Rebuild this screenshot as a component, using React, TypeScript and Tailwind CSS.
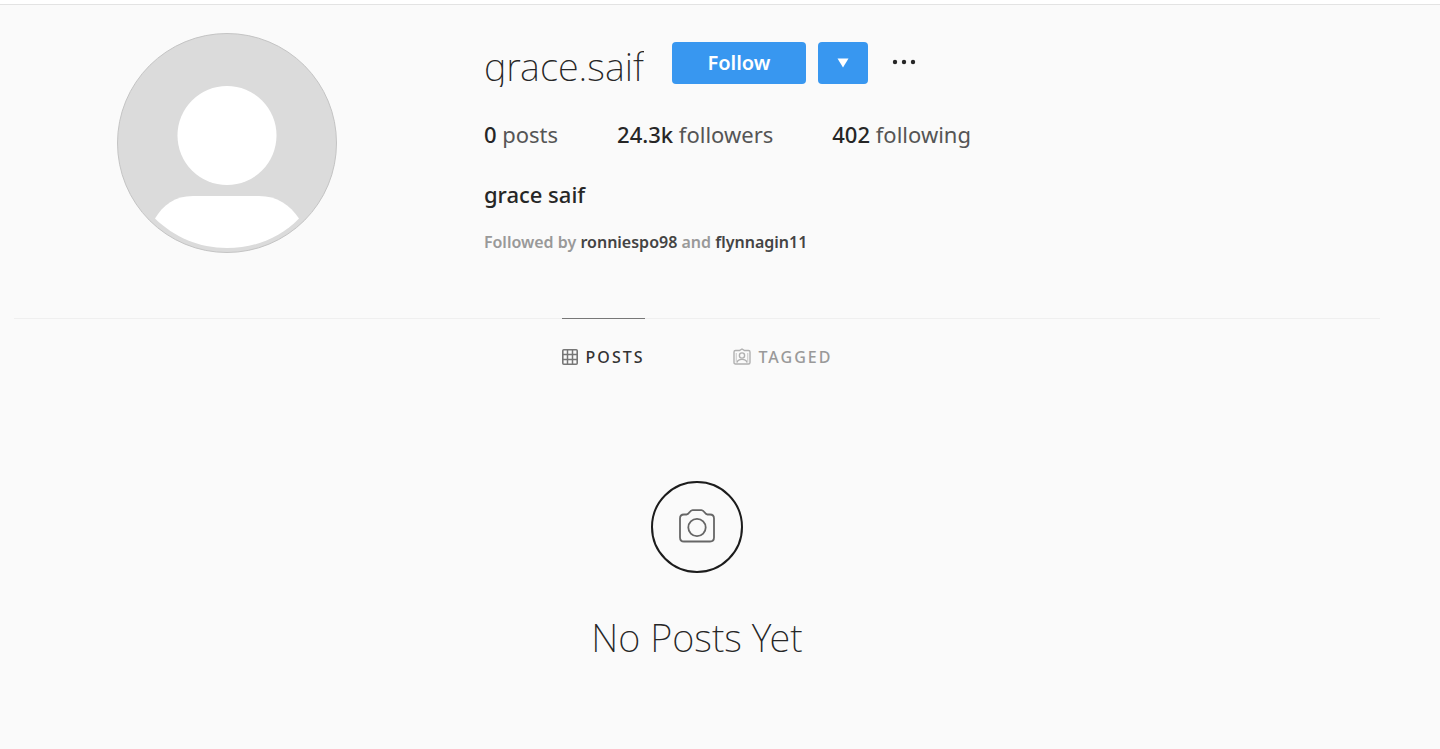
import { useState } from 'react';
import { clsx } from 'clsx';

const stats = [
  { value: '0', label: 'posts' },
  { value: '24.3k', label: 'followers' },
  { value: '402', label: 'following' },
];

function Avatar() {
  return (
    <svg viewBox="0 0 220 220" className="size-[220px]" role="img" aria-label="Profile photo">
      <circle cx="110" cy="110" r="109.5" fill="#dbdbdb" stroke="#c4c4c4" />
      <circle cx="110" cy="102.5" r="49.5" fill="#fff" />
      <path d="M38 185.5C46 172 58 163 76 163H142C160 163 173 172 182 185.5C163 205 138 215 110 215C82 215 57 204 38 185.5Z" fill="#fff" />
    </svg>
  );
}

function GridIcon() {
  return (
    <svg viewBox="0 0 16 16" className="size-4" fill="none" stroke="#777" strokeWidth="1.5" aria-hidden="true">
      <rect x="0.8" y="0.8" width="14.4" height="14.4" rx="1" strokeWidth="1.6" />
      <path d="M5.5 1v14M10.5 1v14M1 5.5h14M1 10.5h14" />
    </svg>
  );
}

function TaggedIcon() {
  return (
    <svg viewBox="0 0 18 18" className="size-[18px]" fill="none" stroke="#b0b0b0" strokeWidth="1.4" aria-hidden="true">
      <path d="M2.5 2.5H6.5L9 1L11.5 2.5H15.5Q17 2.5 17 4V14.5Q17 16 15.5 16H2.5Q1 16 1 14.5V4Q1 2.5 2.5 2.5Z" />
      <circle cx="9" cy="7.5" r="2.6" />
      <path d="M4 14.5C4.5 12 6.5 11.4 9 11.4S13.5 12 14 14.5" />
      <path d="M3.3 5V14.5M14.7 5V14.5" stroke="#d0d0d0" strokeWidth="1.2" />
    </svg>
  );
}

function CameraIcon() {
  return (
    <svg viewBox="0 0 36 34" className="mb-0.5 h-[34px] w-9" fill="none" stroke="#666" strokeWidth="1.8" aria-hidden="true">
      <path d="M5 5.5H7.5C10.5 5.5 10.5 1.2 13.5 1.2H22.5C25.5 1.2 25.5 5.5 28.5 5.5H31Q35 5.5 35 9.5V28.5Q35 32.5 31 32.5H5Q1 32.5 1 28.5V9.5Q1 5.5 5 5.5Z" />
      <circle cx="18" cy="18.5" r="8.7" />
    </svg>
  );
}

export default function App() {
  const [tab, setTab] = useState('posts');

  const tabClass = (name: string) =>
    clsx(
      '-mt-px flex items-center gap-2 border-t pt-[26px] text-base leading-6 font-medium tracking-[2px]',
      tab === name ? 'border-[#777] text-[#333]' : 'border-transparent text-[#999]'
    );

  return (
    <div className="min-h-screen border-t-4 border-white bg-[#fafafa] font-['Noto_Sans',sans-serif] text-[#262626]">
      <div className="h-px bg-[#e3e3e3]" />
      <main className="mr-15 ml-3.5">
        <header className="grid grid-cols-[5fr_11fr] pt-7 pb-16">
          <div className="flex justify-center">
            <Avatar />
          </div>
          <section className="pt-[9px] pl-[43px]">
            <div className="flex items-start">
              <h1 className="h-[45px] overflow-hidden text-[38px] leading-[48px] font-extralight">grace.saif</h1>
              <button className="ml-7 h-[42px] w-[134px] rounded bg-[#3897f0] text-xl font-semibold text-white">
                Follow
              </button>
              <button
                aria-label="Suggested accounts"
                className="ml-3 flex h-[42px] w-[50px] items-center justify-center rounded bg-[#3897f0]"
              >
                <svg viewBox="0 0 12 10" className="h-2.5 w-3" fill="#fff" aria-hidden="true">
                  <path d="M0.5 0.5H11.5L6 9.5Z" />
                </svg>
              </button>
              <button aria-label="More options" className="ml-6 flex h-10 items-center">
                <svg viewBox="0 0 24 6" className="h-1.5 w-6" fill="#262626" aria-hidden="true">
                  <circle cx="3" cy="3" r="2.2" />
                  <circle cx="12" cy="3" r="2.2" />
                  <circle cx="21" cy="3" r="2.2" />
                </svg>
              </button>
            </div>
            <ul className="mt-[31px] flex gap-[59px] text-[22px] leading-8">
              {stats.map((s) => (
                <li key={s.label} className="font-normal text-[#555]">
                  <span className="font-medium text-[#262626]">{s.value}</span> {s.label}
                </li>
              ))}
            </ul>
            <h2 className="mt-7 text-[22px] leading-8 font-medium">grace saif</h2>
            <p className="mt-5 text-base leading-6 font-semibold text-[#999]">
              Followed by{' '}
              <a href="#ronniespo98" className="text-[#444]">ronniespo98</a> and{' '}
              <a href="#flynnagin11" className="text-[#444]">flynnagin11</a>
            </p>
          </section>
        </header>

        <nav className="flex justify-center gap-22 border-t border-[#efefef]">
          <button className={tabClass('posts')} onClick={() => setTab('posts')}>
            <GridIcon />
            POSTS
          </button>
          <button className={tabClass('tagged')} onClick={() => setTab('tagged')}>
            <TaggedIcon />
            TAGGED
          </button>
        </nav>

        <section className="flex flex-col items-center pt-28 pb-16">
          <div className="flex size-[92px] items-center justify-center rounded-full border-2 border-[#1c1c1c]">
            <CameraIcon />
          </div>
          <h2 className="mt-9 text-[38px] leading-[56px] font-extralight">No Posts Yet</h2>
        </section>
      </main>
    </div>
  );
}
